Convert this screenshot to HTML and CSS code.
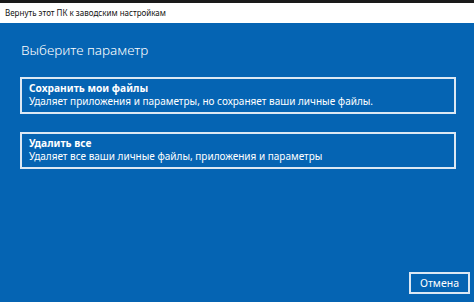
FILE: index.html
```html
<!DOCTYPE html>
<html lang="ru">
<head>
<meta charset="UTF-8">
<title>Вернуть этот ПК к заводским настройкам</title>
<link rel="stylesheet" href="styles.css">
</head>
<body>

<div class="top-strip"></div>
<div class="titlebar">Вернуть этот ПК к заводским настройкам</div>

<div class="panel">
  <h1 class="heading">Выберите параметр</h1>

  <div class="option">
    <div class="option-title">Сохранить мои файлы</div>
    <div class="option-desc">Удаляет приложения и параметры, но сохраняет ваши личные файлы.</div>
  </div>

  <div class="option">
    <div class="option-title">Удалить все</div>
    <div class="option-desc">Удаляет все ваши личные файлы, приложения и параметры</div>
  </div>

  <div class="footer">
    <button class="cancel">Отмена</button>
  </div>
</div>

</body>
</html>
```

FILE: styles.css
```css
html, body {
  margin: 0;
  height: 100%;
}

body {
  font-family: "Noto Sans", "Open Sans", sans-serif;
  background: #0564b3;
  display: flex;
  flex-direction: column;
}

.top-strip {
  height: 3px;
  background: #1a1a1a;
}

.titlebar {
  height: 20px;
  line-height: 20px;
  background: #fff;
  color: #111;
  font-size: 8px;
  padding-left: 5px;
}

.panel {
  flex: 1;
  display: flex;
  flex-direction: column;
  padding: 0 18px 0 20px;
  color: #fff;
}

.heading {
  margin: 18px 0 18px 1px;
  font-size: 13.5px;
  font-weight: 300;
  line-height: 18px;
}

.option {
  border: 2px solid #dce8f4;
  padding: 3px 7px 4px;
  margin-bottom: 18px;
}

.option-title {
  font-size: 10.2px;
  font-weight: 700;
  line-height: 13px;
}

.option-desc {
  font-size: 10px;
  line-height: 13px;
}

.footer {
  margin-top: auto;
  display: flex;
  justify-content: flex-end;
  margin-right: -14px;
  padding-bottom: 8px;
}

.cancel {
  font-family: inherit;
  font-size: 10.5px;
  color: #fff;
  background: #0564b3;
  border: 2px solid #dce8f4;
  box-sizing: border-box;
  width: 61px;
  height: 22px;
  padding: 0;
}
```
